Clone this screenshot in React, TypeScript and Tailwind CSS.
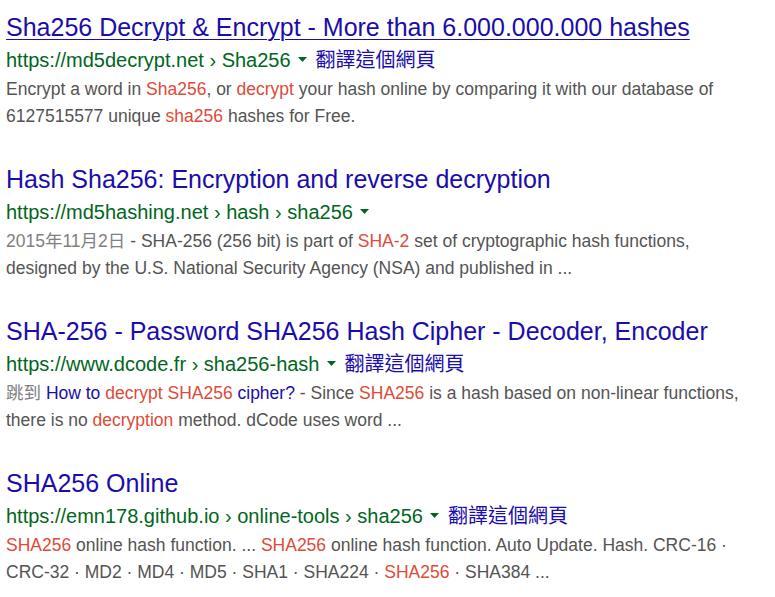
import React from "react";

type Part = { t: string; c?: "em" | "link" | "gray" };

interface ResultProps {
  title: string;
  underline?: boolean;
  crumbs: string;
  translate?: boolean;
  lines: Part[][];
}

const Caret = () => (
  <svg width="9" height="5" viewBox="0 0 9 5" className="inline-block ml-[7px] mb-[4px]">
    <path d="M0 0h9L4.5 5z" fill="#006621" />
  </svg>
);

const Span: React.FC<{ p: Part }> = ({ p }) => {
  if (p.c === "em") return <span className="text-[#dd4b39]">{p.t}</span>;
  if (p.c === "link") return <span className="text-[#1a0dab]">{p.t}</span>;
  if (p.c === "gray")
    return <span className="text-[#808080] leading-none">{p.t}</span>;
  return <span>{p.t}</span>;
};

const Result: React.FC<ResultProps> = ({ title, underline, crumbs, translate, lines }) => {
  return (
    <div className="flex flex-col">
      <a
        className={`text-[25px] leading-[32px] text-[#1a0dab] whitespace-nowrap ${
          underline ? "underline underline-offset-[3px] decoration-[1px]" : ""
        }`}
      >
        {title}
      </a>
      <div className="pt-[2px] text-[20px] leading-[30px] text-[#006621] whitespace-nowrap">
        {crumbs}
        <Caret />
        {translate && (
          <span className="ml-[9px] text-[#1a0dab] leading-none">翻譯這個網頁</span>
        )}
      </div>
      <div className="mt-[1px] text-[17.5px] leading-[27px] text-[#545454]">
        {lines.map((line, i) => (
          <div key={i} className="whitespace-nowrap">
            {line.map((p, j) => (
              <Span key={j} p={p} />
            ))}
          </div>
        ))}
      </div>
    </div>
  );
};

export default function App() {
  return (
    <div
      className="bg-white w-[775px] h-[597px] overflow-hidden pl-[6px] pt-[11px] flex flex-col gap-[33px]"
      style={{ fontFamily: '"Liberation Sans", Arial, "Noto Sans CJK TC", sans-serif' }}
    >
      <Result
        title="Sha256 Decrypt & Encrypt - More than 6.000.000.000 hashes"
        underline
        crumbs="https://md5decrypt.net › Sha256"
        translate
        lines={[
          [
            { t: "Encrypt a word in " },
            { t: "Sha256", c: "em" },
            { t: ", or " },
            { t: "decrypt", c: "em" },
            { t: " your hash online by comparing it with our database of" },
          ],
          [
            { t: "6127515577 unique " },
            { t: "sha256", c: "em" },
            { t: " hashes for Free." },
          ],
        ]}
      />
      <Result
        title="Hash Sha256: Encryption and reverse decryption"
        crumbs="https://md5hashing.net › hash › sha256"
        lines={[
          [
            { t: "2015年11月2日", c: "gray" },
            { t: " - SHA-256 (256 bit) is part of " },
            { t: "SHA-2", c: "em" },
            { t: " set of cryptographic hash functions," },
          ],
          [{ t: "designed by the U.S. National Security Agency (NSA) and published in ..." }],
        ]}
      />
      <Result
        title="SHA-256 - Password SHA256 Hash Cipher - Decoder, Encoder"
        crumbs="https://www.dcode.fr › sha256-hash"
        translate
        lines={[
          [
            { t: "跳到", c: "gray" },
            { t: " " },
            { t: "How to ", c: "link" },
            { t: "decrypt SHA256", c: "em" },
            { t: " cipher?", c: "link" },
            { t: " - Since " },
            { t: "SHA256", c: "em" },
            { t: " is a hash based on non-linear functions," },
          ],
          [
            { t: "there is no " },
            { t: "decryption", c: "em" },
            { t: " method. dCode uses word ..." },
          ],
        ]}
      />
      <Result
        title="SHA256 Online"
        crumbs="https://emn178.github.io › online-tools › sha256"
        translate
        lines={[
          [
            { t: "SHA256", c: "em" },
            { t: " online hash function. ... " },
            { t: "SHA256", c: "em" },
            { t: " online hash function. Auto Update. Hash. CRC-16 ·" },
          ],
          [
            { t: "CRC-32 · MD2 · MD4 · MD5 · SHA1 · SHA224 · " },
            { t: "SHA256", c: "em" },
            { t: " · SHA384 ..." },
          ],
        ]}
      />
    </div>
  );
}
